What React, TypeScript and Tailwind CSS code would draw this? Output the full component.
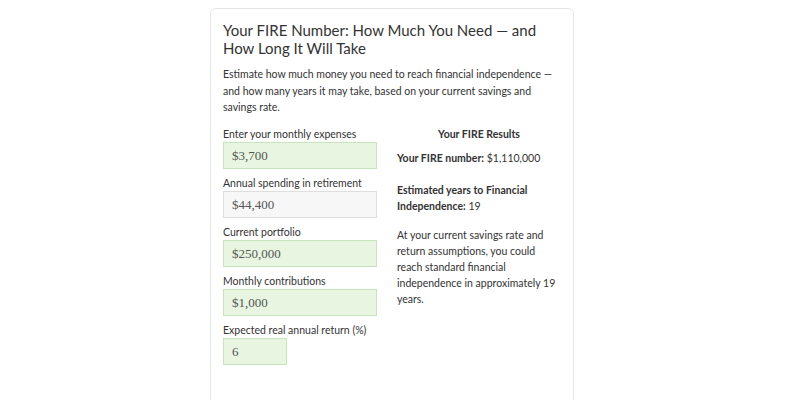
import React from "react"

const fields = [
  { label: "Enter your monthly expenses", value: "$3,700", filled: true, wide: true },
  { label: "Annual spending in retirement", value: "$44,400", filled: false, wide: true },
  { label: "Current portfolio", value: "$250,000", filled: true, wide: true },
  { label: "Monthly contributions", value: "$1,000", filled: true, wide: true },
  { label: "Expected real annual return (%)", value: "6", filled: true, wide: false },
]

export default function App() {
  return (
    <div className="h-[400px] w-[800px] overflow-hidden bg-white font-['Lato',sans-serif] text-[#333]">
      <div className="ml-[210px] mt-[8px] w-[364px] rounded-[6px] border border-[#e6e6e6] px-[12px] pt-[12px] pb-[60px]">
        <h1 className="text-[15px] leading-[18px] font-normal text-[#333]">
          Your FIRE Number: How Much You Need — and How Long It Will Take
        </h1>
        <p className="mt-[9px] text-[10.5px] leading-[16.5px] text-[#333]">
          Estimate how much money you need to reach financial independence — and how many years it may take, based on your current savings and savings rate.
        </p>

        <div className="mt-[10px] flex gap-[20px]">
          <div className="w-[154px] shrink-0">
            {fields.map((f, i) => (
              <div key={f.label} className={i === 0 ? "pt-[1px]" : "mt-[7px]"}>
                <label className="block text-[10.5px] leading-[15px] text-[#333]">{f.label}</label>
                <div
                  className={
                    "h-[27px] border px-[8px] font-['Liberation_Serif',serif] text-[13px] leading-[25px] text-[#555] " +
                    (f.wide ? "w-[154px] " : "w-[64px] ") +
                    (f.filled ? "border-[#c6e4bb] bg-[#e7f5e1]" : "border-[#dedede] bg-[#f7f7f7]")
                  }
                >
                  {f.value}
                </div>
              </div>
            ))}
          </div>

          <div className="w-[164px] text-[10.5px] leading-[16px] text-[#333]">
            <div className="text-center font-bold">Your FIRE Results</div>
            <div className="mt-[8px]">
              <b>Your FIRE number:</b> $1,110,000
            </div>
            <div className="mt-[16px]">
              <b>Estimated years to Financial Independence:</b> 19
            </div>
            <p className="mt-[13px]">
              At your current savings rate and return assumptions, you could reach standard financial independence in approximately 19 years.
            </p>
          </div>
        </div>
      </div>
    </div>
  )
}
